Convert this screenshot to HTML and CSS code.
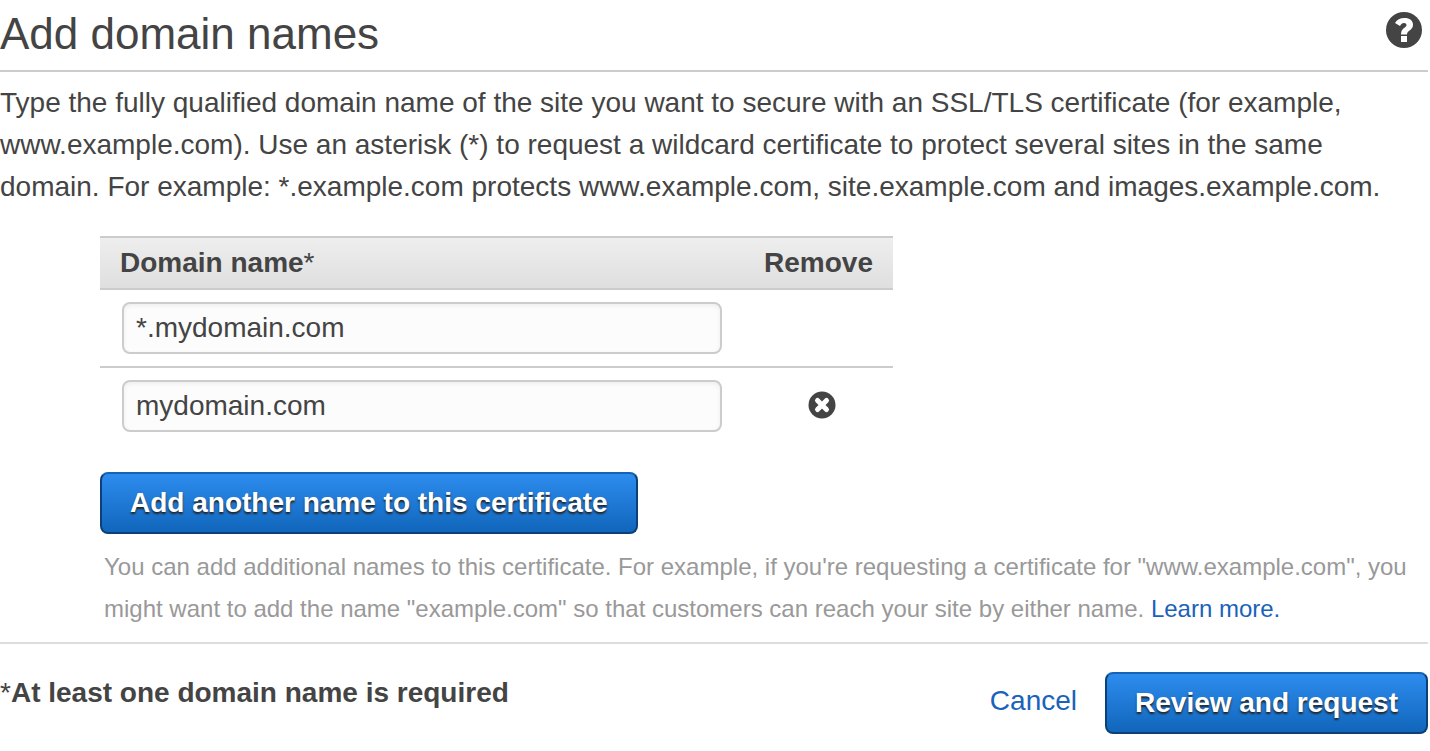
FILE: index.html
```html
<!DOCTYPE html>
<html lang="en">
<head>
    <meta charset="UTF-8">
    <meta name="viewport" content="width=device-width, initial-scale=1.0">
    <title>Add domain names</title>
    <link rel="stylesheet" href="styles.css">
</head>
<body>
    <form class="page">
        <header class="page-header">
            <h1>Add domain names</h1>
            <button type="button" class="icon-button help" aria-label="Help">
                <svg width="36" height="36" viewBox="0 0 36 36">
                    <circle cx="18" cy="18" r="18" fill="#444"/>
                    <path d="M9 11C11 7.500 14 6 18.500 6c5.200 0 8.500 2.600 8.500 6.700 0 5.800-6 5.300-6 9.800h-6c0-7 5.500-6.300 5.500-9.500 0-1.300-1-2-2.500-2-1.800 0-3 1-4 3z" fill="#fff"/>
                    <rect x="15" y="24" width="6" height="6" fill="#fff"/>
                </svg>
            </button>
        </header>

        <p class="intro">Type the fully qualified domain name of the site you want to secure with an SSL/TLS certificate (for example, www.example.com). Use an asterisk (*) to request a wildcard certificate to protect several sites in the same domain. For example: *.example.com protects www.example.com, site.example.com and images.example.com.</p>

        <div class="domains">
            <table class="domain-table">
                <thead>
                    <tr>
                        <th>Domain name<span class="star">*</span></th>
                        <th class="remove">Remove</th>
                    </tr>
                </thead>
                <tbody>
                    <tr>
                        <td><input type="text" class="domain-input" aria-label="Domain name 1" value="*.mydomain.com"></td>
                        <td class="remove"></td>
                    </tr>
                    <tr>
                        <td><input type="text" class="domain-input" aria-label="Domain name 2" value="mydomain.com"></td>
                        <td class="remove">
                            <button type="button" class="icon-button" aria-label="Remove mydomain.com">
                                <svg width="28" height="28" viewBox="0 0 28 28">
                                    <circle cx="14" cy="14" r="13.500" fill="#444"/>
                                    <path d="M9.500 9.500l9 9M18.500 9.500l-9 9" stroke="#fff" stroke-width="5" stroke-linecap="round"/>
                                </svg>
                            </button>
                        </td>
                    </tr>
                </tbody>
            </table>

            <button type="button" class="btn">Add another name to this certificate</button>
            <p class="hint">You can add additional names to this certificate. For example, if you're requesting a certificate for "www.example.com", you might want to add the name "example.com" so that customers can reach your site by either name. <a href="#">Learn more.</a></p>
        </div>

        <footer class="page-footer">
            <strong class="required"><span class="star">*</span>At least one domain name is required</strong>
            <div class="actions">
                <a href="#" class="cancel">Cancel</a>
                <button type="submit" class="btn">Review and request</button>
            </div>
        </footer>
    </form>
</body>
</html>
```
FILE: styles.css
```css
* {
    box-sizing: border-box;
}
body {
    margin: 0;
    background: #fff;
    color: #444;
    font-family: "Liberation Sans", Arial, sans-serif;
    font-size: 28px;
    line-height: 42px;
}
.page {
    padding-right: 2px;
}
.page-header {
    display: flex;
    justify-content: space-between;
    align-items: flex-start;
    padding: 12px 6px 14px 0;
    border-bottom: 2px solid #ccc;
}
h1 {
    margin: 0;
    font-size: 44px;
    font-weight: normal;
    line-height: 44px;
}
p {
    margin: 0;
}
a {
    color: #1a62ba;
    text-decoration: none;
}
.star {
    font-weight: normal;
}
.icon-button {
    display: inline-block;
    padding: 0;
    border: none;
    background: none;
    cursor: pointer;
}
.icon-button svg {
    display: block;
}
.intro {
    padding-top: 10px;
}
.domains {
    padding: 28px 0 12px 100px;
}
.domain-table {
    width: 793px;
    max-width: 100%;
    margin-bottom: 28px;
    border-collapse: separate;
    border-spacing: 0;
}
.domain-table th {
    height: 54px;
    padding: 0 20px;
    border-top: 2px solid #ccc;
    border-bottom: 2px solid #ccc;
    background: linear-gradient(#eee, #dfdfdf);
    text-align: left;
}
.domain-table td {
    padding: 12px 22px;
}
.domain-table tr + tr td {
    border-top: 2px solid #ccc;
}
.domain-table .remove {
    width: 148px;
    padding: 0 20px;
    text-align: right;
}
.domain-table td.remove {
    padding: 0 0 6px 6px;
    text-align: center;
}
.domain-table .icon-button {
    vertical-align: middle;
}
.domain-input {
    display: block;
    width: 600px;
    height: 52px;
    padding: 0 12px;
    border: 2px solid #ccc;
    border-radius: 8px;
    background: #fcfcfc;
    box-shadow: inset 0 2px 4px #eee;
    color: #444;
    font: inherit;
}
.btn {
    height: 62px;
    padding: 0 28px;
    border: 2px solid #0b4178;
    border-top-color: #1463b5;
    border-radius: 8px;
    background: linear-gradient(#2d8cee, #1166bb);
    color: #fff;
    font: inherit;
    font-weight: bold;
    text-shadow: 0 2px 2px #222;
    cursor: pointer;
}
.hint {
    padding: 12px 0 0 4px;
    color: #999;
    font-size: 24px;
}
.page-footer {
    display: flex;
    justify-content: space-between;
    padding-top: 28px;
    border-top: 2px solid #ddd;
}
.actions {
    display: flex;
    align-items: flex-start;
    gap: 28px;
}
.cancel {
    padding-top: 8px;
}
```
